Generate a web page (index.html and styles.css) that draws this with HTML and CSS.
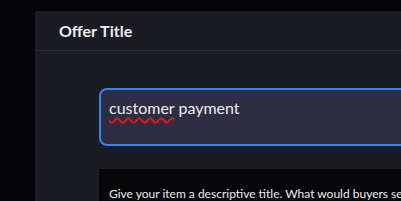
FILE: index.html
```html
<!DOCTYPE html>
<html>
<head>
  <meta charset="UTF-8">
  <title>Offer Title</title>
  <link rel="stylesheet" href="styles.css">
</head>
<body>
  <div class="panel">
    <div class="panelHeader">Offer Title</div>
    <div class="panelBody">
      <div class="titleInput"><span class="misspelled">customer</span> payment</div>
      <div class="hintBox">Give your item a descriptive title. What would buyers search for?</div>
    </div>
  </div>
</body>
</html>
```

FILE: styles.css
```css
body {
  margin: 0;
  padding: 11px 0 0 35px;
  background-color: #050508;
  font-family: Lato, "Open Sans", sans-serif;
  color: #ececf1;
  overflow: hidden;
  height: 201px;
  box-sizing: border-box;
}

.panel {
  background-color: #1b1b24;
  width: 600px;
  height: 400px;
}

.panelHeader {
  height: 39px;
  line-height: 40px;
  padding-left: 24px;
  font-size: 16px;
  font-weight: bold;
  border-bottom: 1px solid #2a2a35;
}

.panelBody {
  padding: 37px 0 0 64px;
}

.titleInput {
  height: 54px;
  border: 2px solid #3b80f2;
  border-radius: 8px;
  background-color: #2f2d43;
  padding: 0 8px;
  font-size: 16px;
  line-height: 36px;
  white-space: nowrap;
}

.misspelled {
  text-decoration: underline wavy #e8141a;
  text-decoration-thickness: 1.5px;
  text-underline-offset: 3px;
}

.hintBox {
  margin-top: 23px;
  background-color: #060609;
  padding: 17px 10px;
  font-size: 12px;
  white-space: nowrap;
}
```
